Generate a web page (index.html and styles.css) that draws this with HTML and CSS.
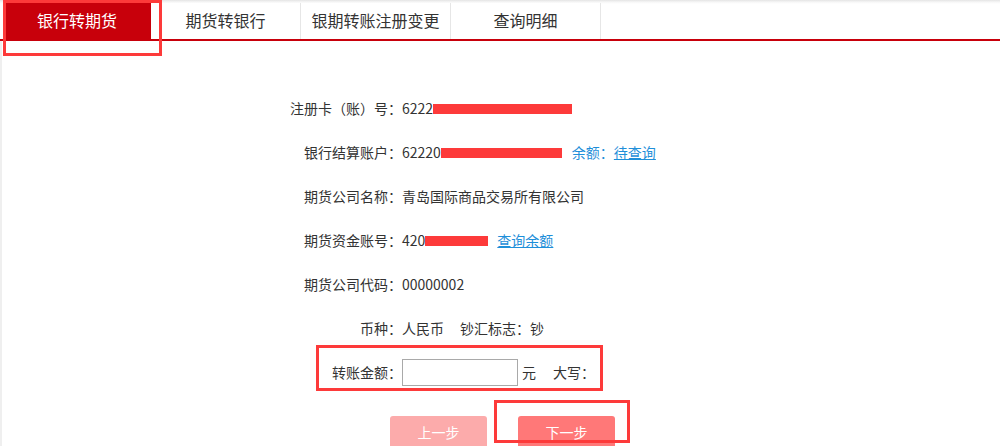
FILE: index.html
```html
<!DOCTYPE html>
<html lang="zh-CN">
<head>
<meta charset="utf-8">
<title>银行转期货</title>
<link rel="stylesheet" href="styles.css">
</head>
<body>
<div class="page">
  <nav class="tabs">
    <div class="tab active">银行转期货</div>
    <div class="tab">期货转银行</div>
    <div class="tab">银期转账注册变更</div>
    <div class="tab">查询明细</div>
  </nav>
  <main class="content">
    <div class="form">
      <div class="row"><span class="label">注册卡<span class="p">（</span>账<span class="p">）</span>号<span class="p">：</span></span><span class="val">6222<span class="mask m1"></span></span></div>
      <div class="row"><span class="label">银行结算账户<span class="p">：</span></span><span class="val">62220<span class="mask m2"></span></span><span class="blue">余额<span class="p">：</span><a class="link" href="#">待查询</a></span></div>
      <div class="row"><span class="label">期货公司名称<span class="p">：</span></span><span class="val">青岛国际商品交易所有限公司</span></div>
      <div class="row"><span class="label">期货资金账号<span class="p">：</span></span><span class="val">420<span class="mask m3"></span></span><a class="link" href="#">查询余额</a></div>
      <div class="row"><span class="label">期货公司代码<span class="p">：</span></span><span class="val">00000002</span></div>
      <div class="row"><span class="label">币种<span class="p">：</span></span><span class="val">人民币</span><span class="extra">钞汇标志<span class="p">：</span>钞</span></div>
      <div class="row"><span class="label">转账金额<span class="p">：</span></span><input class="amount" type="text"><span class="unit">元</span><span class="daxie">大写<span class="p">：</span></span></div>
    </div>
    <div class="buttons">
      <button class="btn prev">上一步</button>
      <button class="btn next">下一步</button>
    </div>
  </main>
  <div class="mark mark1"></div>
  <div class="mark mark2"></div>
  <div class="mark mark3"></div>
</div>
</body>
</html>
```
FILE: styles.css
```css
html, body {
  margin: 0;
  padding: 0;
  background: #fff;
}
body {
  font-family: "Noto Sans CJK SC", "Liberation Sans", sans-serif;
  color: #333;
  overflow: hidden;
}
.page {
  position: relative;
  width: 1000px;
  height: 446px;
  overflow: hidden;
}
.tabs {
  display: flex;
  height: 36px;
  padding: 3px 0 0 3px;
  border-bottom: 2px solid #c8000b;
  background: linear-gradient(#e4e4e4, #f6f6f6 2px, #fff 4px);
}
.tab {
  width: 149px;
  height: 36px;
  line-height: 34px;
  text-align: center;
  font-size: 16px;
  color: #333;
  border-right: 1px solid #e6e6e6;
  background: #fff;
}
.tab.active {
  width: 148px;
  border-right: none;
  background: #c8000b;
  color: #fff;
}
.content {
  border-left: 2px solid #efefef;
  padding-top: 45px;
  height: 360px;
}
.form {
  display: flex;
  flex-direction: column;
}
.row {
  display: flex;
  align-items: center;
  height: 44px;
  font-size: 14px;
  line-height: 20px;
}
.p {
  font-family: "Noto Sans CJK TC", "Noto Sans CJK SC", sans-serif;
}
.label {
  width: 400px;
  text-align: right;
  flex: none;
}
.val {
  display: inline-flex;
  align-items: center;
}
.mask {
  display: inline-block;
  background: #fd3a3a;
  position: relative;
  top: 1px;
}
.m1 { width: 139px; height: 10px; }
.m2 { width: 121px; height: 10px; }
.m3 { width: 63px; height: 10px; }
.blue {
  color: #1f8fd9;
  margin-left: 10px;
}
.link {
  color: #1f8fd9;
  text-decoration: underline;
}
.row > .link {
  margin-left: 9px;
}
.extra {
  margin-left: 16px;
}
.amount {
  box-sizing: border-box;
  width: 116px;
  height: 27px;
  border: 1px solid #a9a9a9;
  margin: 0;
  padding: 0 4px;
  font: inherit;
}
.unit {
  margin-left: 4px;
}
.daxie {
  margin-left: 17px;
}
.buttons {
  display: flex;
  justify-content: center;
  gap: 31px;
  margin-top: 22px;
  padding-left: 3px;
}
.btn {
  width: 97px;
  height: 32px;
  border: none;
  border-radius: 3px;
  color: #fff;
  font-family: inherit;
  font-size: 14px;
  padding: 0;
}
.prev { background: #fcabab; }
.next { background: #ff7878; }
.mark {
  position: absolute;
  box-sizing: border-box;
  border: 3px solid #fd3a3a;
}
.mark1 { left: 3px; top: 0; width: 159px; height: 56px; }
.mark2 { left: 316px; top: 345px; width: 287px; height: 46px; }
.mark3 { left: 494px; top: 400px; width: 136px; height: 43px; }
```
